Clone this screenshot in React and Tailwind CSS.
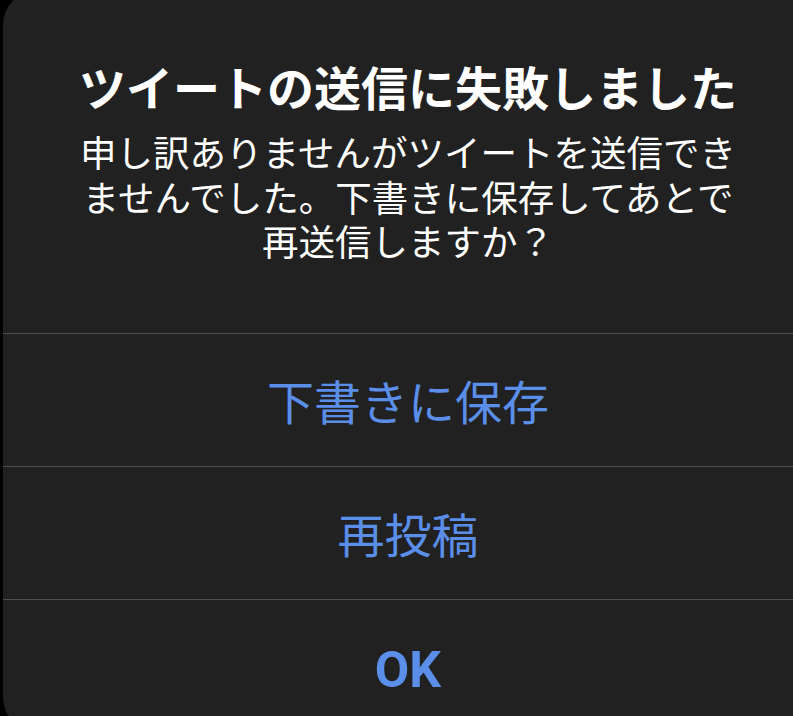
import React from 'react';

const jp = { fontFamily: '"Noto Sans CJK JP", "Noto Sans", sans-serif' };

function ActionButton({ label, bold, last }) {
  return (
    <>
      <div className="h-px bg-[#4f4f4f]" />
      <button
        className={`flex h-[132px] w-full items-center justify-center text-[#5a8ee8] ${bold ? 'pt-[10px] text-[50px] font-bold' : 'pt-[2px] text-[47px]'}`}
        style={bold ? { fontFamily: 'Roboto, "Noto Sans CJK JP", sans-serif' } : jp}
      >
        {label}
      </button>
    </>
  );
}

export default function App() {
  return (
    <div className="h-[716px] w-[793px] overflow-hidden bg-black">
      <div className="ml-[3px] mt-[-10px] flex w-[810px] flex-col rounded-[35px] bg-[#212121]" style={jp}>
        <div className="flex flex-col items-center pb-[69px] pt-[68px] text-center text-white">
          <h2 className="text-[47px] font-bold leading-[56px]">ツイートの送信に失敗しました</h2>
          <p className="mt-[16px] text-[36.5px] leading-[44.5px]">
            申し訳ありませんがツイートを送信でき
            <br />
            ませんでした。下書きに保存してあとで
            <br />
            再送信しますか？
          </p>
        </div>
        <ActionButton label="下書きに保存" />
        <ActionButton label="再投稿" />
        <ActionButton label="OK" bold last />
      </div>
    </div>
  );
}
